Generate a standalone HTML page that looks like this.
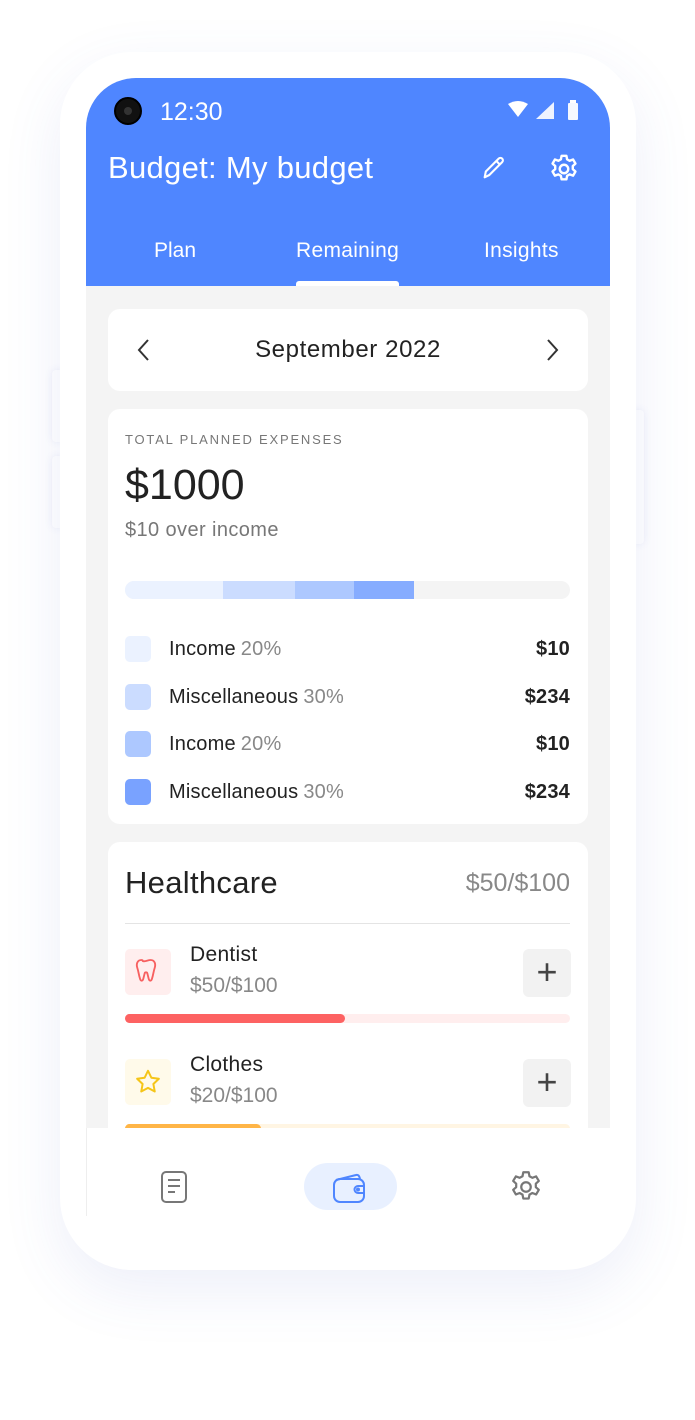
<!DOCTYPE html>
<html><head><meta charset="utf-8"><style>
*{margin:0;padding:0;box-sizing:border-box}
body{width:695px;height:1420px;background:#fff;font-family:"Liberation Sans",sans-serif;position:relative;overflow:hidden}
.abs{position:absolute}
.phone{left:60px;top:52px;width:576px;height:1218px;background:#fff;border-radius:72px;box-shadow:0 20px 60px rgba(80,100,200,0.10)}
.btn{background:#fff;border-radius:4px;box-shadow:0 0 8px rgba(80,100,200,0.10)}
.screen{left:86px;top:78px;width:524px;height:1138px;border-radius:50px 50px 0 0;overflow:hidden;background:#f4f4f4}
.hdr{left:0;top:0;width:524px;height:208px;background:#4f86ff;color:#fff}
.card{background:#fff;border-radius:12px;position:absolute;left:22px;width:480px}
.lg{display:flex;align-items:center;position:absolute;left:17px;right:18px;font-size:20px;color:#222;letter-spacing:0.2px}
.sw{width:26px;height:26px;border-radius:5px;margin-right:18px}
.lg .p{color:#888;margin-left:5px}
.lg .v{margin-left:auto;font-weight:bold;font-size:20px}
.plus{position:absolute;right:17px;width:48px;height:48px;background:#f2f2f2;border-radius:6px;font-size:36px;line-height:46px;text-align:center;color:#444}
</style></head><body>
<div class="abs btn" style="left:52px;top:370px;width:12px;height:72px"></div>
<div class="abs btn" style="left:52px;top:456px;width:12px;height:72px"></div>
<div class="abs btn" style="left:632px;top:410px;width:12px;height:134px"></div>
<div class="abs phone"></div>
<div class="abs screen">
 <div class="abs hdr">
  <div class="abs" style="left:28px;top:19px;width:28px;height:28px;border-radius:50%;background:#111;border:2px solid #000"><div style="width:8px;height:8px;background:#333;border-radius:50%;margin:8px"></div></div>
  <div class="abs" style="left:74px;top:20px;font-size:25px">12:30</div>
  <svg class="abs" style="left:420px;top:22px" width="80" height="22"><path d="M2 4 Q12 -2 22 4 L12 17Z" fill="#fff"/><path d="M48 2 L48 19 L30 19Z" fill="#fff" opacity=".9"/><rect x="62" y="3" width="10" height="17" rx="1" fill="#fff" opacity=".95"/><rect x="64" y="0" width="6" height="3" fill="#fff"/></svg>
  <div class="abs" style="left:22px;top:72px;font-size:31px;letter-spacing:0.3px">Budget: My budget</div>
  <svg class="abs" style="left:394px;top:76px" width="28" height="28" viewBox="0 0 24 24" fill="none" stroke="#fff" stroke-width="1.8" stroke-linejoin="round"><path d="M4 20l1-5L16 4a2.1 2.1 0 0 1 3 3L8 18z M14 6l3 3"/></svg>
  <svg class="abs" style="left:461px;top:74px" width="34" height="34" viewBox="0 0 24 24" fill="none" stroke="#fff" stroke-width="1.7" stroke-linejoin="round"><path d="M10.3 2.7h3.4l.5 2.5 1.8 1 2.4-.9 1.7 2.9-1.9 1.7v2.2l1.9 1.7-1.7 2.9-2.4-.9-1.8 1-.5 2.5h-3.4l-.5-2.5-1.8-1-2.4.9-1.7-2.9 1.9-1.7v-2.2L3.9 8.2l1.7-2.9 2.4.9 1.8-1z"/><circle cx="12" cy="12" r="3"/></svg>
  <div class="abs" style="left:68px;top:161px;font-size:21px">Plan</div>
  <div class="abs" style="left:210px;top:161px;font-size:21px;letter-spacing:0.3px">Remaining</div>
  <div class="abs" style="left:398px;top:161px;font-size:21px;letter-spacing:0.3px">Insights</div>
  <div class="abs" style="left:210px;top:203px;width:103px;height:5px;background:#fff;border-radius:3px 3px 0 0"></div>
 </div>
 <div class="card" style="top:231px;height:82px">
  <svg class="abs" style="left:28px;top:29px" width="14" height="24"><path d="M12 2L3 12l9 10" fill="none" stroke="#333" stroke-width="2"/></svg>
  <div class="abs" style="left:0;width:480px;text-align:center;top:27px;font-size:24px;letter-spacing:0.6px;color:#222">September 2022</div>
  <svg class="abs" style="left:438px;top:29px" width="14" height="24"><path d="M2 2l9 10-9 10" fill="none" stroke="#333" stroke-width="2"/></svg>
 </div>
 <div class="card" style="top:331px;height:415px">
  <div class="abs" style="left:17px;top:23px;font-size:13px;letter-spacing:1.8px;color:#777">TOTAL PLANNED EXPENSES</div>
  <div class="abs" style="left:17px;top:52px;font-size:43px;color:#222">$1000</div>
  <div class="abs" style="left:17px;top:110px;font-size:20px;letter-spacing:0.4px;color:#777">$10 over income</div>
  <div class="abs" style="left:17px;top:172px;width:445px;height:18px;border-radius:9px;overflow:hidden;background:#f4f4f4;display:flex">
   <div style="width:98px;background:#ebf2ff"></div><div style="width:72px;background:#cbdcff"></div><div style="width:59px;background:#adc8ff"></div><div style="width:60px;background:#86acff"></div></div>
  <div class="lg" style="top:227px"><div class="sw" style="background:#ebf2ff"></div>Income<span class="p">20%</span><span class="v">$10</span></div>
  <div class="lg" style="top:275px"><div class="sw" style="background:#cbdcff"></div>Miscellaneous<span class="p">30%</span><span class="v">$234</span></div>
  <div class="lg" style="top:322px"><div class="sw" style="background:#adc8ff"></div>Income<span class="p">20%</span><span class="v">$10</span></div>
  <div class="lg" style="top:370px"><div class="sw" style="background:#79a2ff"></div>Miscellaneous<span class="p">30%</span><span class="v">$234</span></div>
 </div>
 <div class="card" style="top:764px;height:420px">
  <div class="abs" style="left:17px;top:23px;font-size:31px;letter-spacing:0.3px;color:#222">Healthcare</div>
  <div class="abs" style="right:18px;top:27px;font-size:25px;color:#888">$50/$100</div>
  <div class="abs" style="left:17px;top:81px;width:445px;height:1px;background:#e4e4e4"></div>
  <div class="abs" style="left:17px;top:107px;width:46px;height:46px;background:#ffeeee;border-radius:5px"></div>
  <svg class="abs" style="left:24px;top:114px" width="32" height="32" viewBox="0 0 24 24" fill="none" stroke="#f76060" stroke-width="1.4"><path d="M7 3c-3 0-4 3-3 6 1 3 1 5 2 8 .5 2 2 2 2.5 0l1-4c.3-1 1.7-1 2 0l1 4c.5 2 2 2 2.5 0 1-3 1-5 2-8 1-3 0-6-3-6-2 0-3 1-5 1S9 3 7 3z"/></svg>
  <div class="abs" style="left:82px;top:101px;font-size:21px;letter-spacing:0.3px;color:#222">Dentist</div>
  <div class="abs" style="left:82px;top:132px;font-size:21px;color:#888">$50/$100</div>
  <div class="plus" style="top:107px">+</div>
  <div class="abs" style="left:17px;top:172px;width:445px;height:9px;border-radius:5px;background:#ffeeee"><div style="width:220px;height:9px;border-radius:5px;background:#fd6262"></div></div>
  <div class="abs" style="left:17px;top:217px;width:46px;height:46px;background:#fffaea;border-radius:5px"></div>
  <svg class="abs" style="left:25px;top:225px" width="30" height="30" viewBox="0 0 24 24" fill="none" stroke="#f5c518" stroke-width="1.6" stroke-linejoin="round"><path d="M12 3l2.7 5.6 6 .8-4.4 4.2 1.1 6L12 16.7 6.6 19.6l1.1-6L3.3 9.4l6-.8z"/></svg>
  <div class="abs" style="left:82px;top:211px;font-size:21px;letter-spacing:0.3px;color:#222">Clothes</div>
  <div class="abs" style="left:82px;top:242px;font-size:21px;color:#888">$20/$100</div>
  <div class="plus" style="top:217px">+</div>
  <div class="abs" style="left:17px;top:282px;width:445px;height:9px;border-radius:5px;background:#fff5e3"><div style="width:136px;height:9px;border-radius:5px;background:#ffb547"></div></div>
 </div>
 <div class="abs" style="left:0;top:1050px;width:524px;height:90px;background:#fff">
  <svg class="abs" style="left:74px;top:42px" width="28" height="34" viewBox="0 0 28 34" fill="none" stroke="#777" stroke-width="2"><rect x="2" y="2" width="24" height="30" rx="4"/><path d="M8 10h12M8 16h12M8 22h7"/></svg>
  <div class="abs" style="left:218px;top:35px;width:93px;height:47px;border-radius:24px;background:#e8f0ff"></div>
  <svg class="abs" style="left:246px;top:44px" width="34" height="32" viewBox="0 0 34 32" fill="none" stroke="#4f86ff" stroke-width="2"><path d="M4 8 L24 3 Q27 2 28 7"/><rect x="2" y="7" width="30" height="23" rx="6"/><path d="M32 14h-6a3 3 0 0 0 0 7h6"/><circle cx="26" cy="17.5" r="1" fill="#4f86ff"/></svg>
  <svg class="abs" style="left:421px;top:40px" width="38" height="38" viewBox="0 0 24 24" fill="none" stroke="#777" stroke-width="1.4" stroke-linejoin="round"><path d="M10.3 2.7h3.4l.5 2.5 1.8 1 2.4-.9 1.7 2.9-1.9 1.7v2.2l1.9 1.7-1.7 2.9-2.4-.9-1.8 1-.5 2.5h-3.4l-.5-2.5-1.8-1-2.4.9-1.7-2.9 1.9-1.7v-2.2L3.9 8.2l1.7-2.9 2.4.9 1.8-1z"/><circle cx="12" cy="12" r="3"/></svg>
 </div>
 <div class="abs" style="left:0;top:1050px;width:1px;height:90px;background:#eee"></div>
</div>
</body></html>
